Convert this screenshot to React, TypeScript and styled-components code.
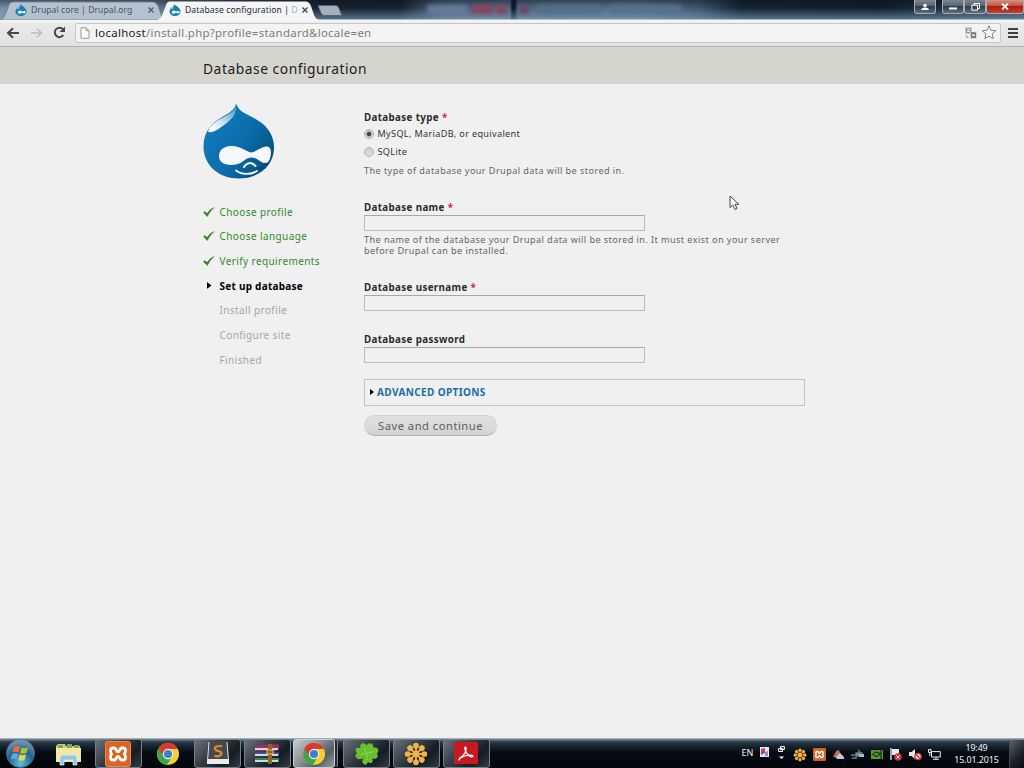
import React from "react";
import styled, { createGlobalStyle, css } from "styled-components";

const GlobalStyle = createGlobalStyle`
  * { box-sizing: border-box; }
  html, body { margin: 0; padding: 0; }
  body { width: 1024px; height: 768px; overflow: hidden; background: #f0f0f0; }
`;

const Screen = styled.div`
  position: relative;
  width: 1024px;
  height: 768px;
  display: flex;
  flex-direction: column;
  font-family: "Noto Sans", "Open Sans", sans-serif;
  background: #f0f0f0;
  white-space: nowrap;
  overflow: hidden;
`;

/* ---------- browser chrome ---------- */

const TabStrip = styled.div`
  height: 20px;
  flex: none;
  display: flex;
  align-items: flex-start;
  background:
    linear-gradient(180deg, rgba(10, 16, 24, 0.45) 0, rgba(120, 150, 180, 0) 40%, rgba(134, 165, 194, 0.55) 92%, #c5d8e8 100%),
    linear-gradient(90deg, #7890a8 0, #64798d 150px, #17212d 320px, #152230 400px, #4b617a 440px, #536a84 510px, #101c28 512px, #101c28 515px, #4d6980 518px, #547089 640px, #3d566c 700px, #152435 740px, #0f1d2d 880px, #2d4255 1024px);
`;

const TabShape = styled.svg`
  position: absolute;
  left: 0;
  top: 0;
`;

const Tab = styled.div<{ $width: number; $active?: boolean }>`
  position: relative;
  width: ${(p) => p.$width}px;
  height: 20px;
  display: flex;
  align-items: center;
  padding-left: 15px;
  color: ${(p) => (p.$active ? "#2a2a2a" : "#4c5560")};
  z-index: ${(p) => (p.$active ? 1 : 0)};
`;

const TabTitle = styled.span<{ $spacing: number; $width: number }>`
  position: relative;
  width: ${(p) => p.$width}px;
  margin-left: 4px;
  font-size: 8.6px;
  line-height: 20px;
  letter-spacing: ${(p) => p.$spacing}px;
  overflow: hidden;
`;

const Fade = styled.span`
  opacity: 0.35;
`;

const Glyph = styled.svg`
  position: relative;
  display: block;
  flex: none;
`;

const NewTab = styled.svg`
  display: block;
  margin: 5px 0 0 0;
`;

const BackgroundTitles = styled.div`
  display: flex;
  margin-left: 84px;
  width: 490px;
  height: 18px;
  padding-top: 5px;
  filter: blur(2px);
`;

const Smudge = styled.span<{ $width: number; $gap: number; $color: string }>`
  width: ${(p) => p.$width}px;
  margin-right: ${(p) => p.$gap}px;
  height: 9px;
  background: ${(p) => p.$color};
`;

const WindowButtons = styled.div`
  display: flex;
  margin-left: auto;
  height: 14px;
`;

const WindowButton = styled.div<{ $width: number; $close?: boolean; $gap?: number }>`
  width: ${(p) => p.$width}px;
  height: 14px;
  margin-right: ${(p) => p.$gap ?? 0}px;
  display: flex;
  align-items: center;
  justify-content: center;
  border: 1px solid #a3adb7;
  border-top: 0;
  border-radius: 0 0 3px 3px;
  background: ${(p) =>
    p.$close
      ? "linear-gradient(#d59387 0, #c4513f 45%, #a91f10 50%, #c7402b 100%)"
      : "linear-gradient(#7c8691 0, #566270 45%, #303d4a 50%, #5f6d7a 100%)"};
`;

const Toolbar = styled.div`
  height: 27px;
  flex: none;
  display: flex;
  align-items: center;
  padding: 0 4px 1px 6px;
  gap: 8px;
  background: linear-gradient(#f6f7f8 0, #e9e9e9 4px, #e2e2e2 100%);
  border-bottom: 1px solid #b2b2b2;
`;

const AddressBar = styled.div`
  width: 926px;
  height: 20px;
  display: flex;
  align-items: center;
  padding: 0 3px 0 4px;
  background: #f3f3f3;
  border: 1px solid #c6c6c6;
  border-radius: 2px;
`;

const Url = styled.span`
  flex: 1;
  margin-left: 5px;
  font-size: 11.4px;
  line-height: 18px;
  letter-spacing: 0.31px;
  color: #7d7d7d;
`;

const Host = styled.span`
  color: #222;
`;

const MenuLines = styled.div`
  width: 10px;
  height: 10px;
  margin-left: -1px;
  border-top: 2px solid #3e3e3e;
  border-bottom: 2px solid #3e3e3e;
  display: flex;
  align-items: center;
  &::after {
    content: "";
    width: 100%;
    height: 2px;
    background: #3e3e3e;
  }
`;

/* ---------- installer page ---------- */

const TitleBand = styled.header`
  height: 37px;
  flex: none;
  padding: 0 0 0 203px;
  background: #d5d5ce;
`;

const PageTitle = styled.h1`
  margin: 0;
  font-size: 13.8px;
  font-weight: 400;
  line-height: 43px;
  letter-spacing: 0.54px;
  color: #1c1c1c;
`;

const Page = styled.main`
  flex: 1;
  display: grid;
  grid-template-columns: 161px 441px;
  align-items: start;
  padding: 19px 0 0 203px;
`;

const Steps = styled.ol`
  list-style: none;
  margin: 19.3px 0 0;
  padding: 0;
`;

type StepState = "done" | "active" | "todo";

const stepStyles = {
  done: css`color: #35892f; letter-spacing: 0.4px;`,
  active: css`color: #000; font-weight: 700; letter-spacing: 0.25px;`,
  todo: css`color: #a5a5a5; letter-spacing: 0.4px;`,
};

const Step = styled.li<{ $state: StepState }>`
  height: 24.7px;
  display: grid;
  grid-template-columns: 16.5px auto;
  align-items: center;
  font-size: 10px;
  line-height: 24px;
  ${(p) => stepStyles[p.$state]}
`;

const Form = styled.form`
  padding-top: 9px;
`;

const Field = styled.div<{ $gap: number }>`
  margin-bottom: ${(p) => p.$gap}px;
`;

const Label = styled.div`
  height: 12px;
  font-size: 9.8px;
  line-height: 12px;
  font-weight: 700;
  letter-spacing: 0.35px;
  color: #2b2b2b;
`;

const Required = styled.span`
  color: #d4283c;
`;

const Radios = styled.div`
  padding-top: 0.5px;
`;

const RadioRow = styled.label`
  height: 18px;
  display: flex;
  align-items: center;
  gap: 3.5px;
  font-size: 9.1px;
  letter-spacing: 0.34px;
  color: #333;
`;

const RadioDot = styled.span<{ $checked?: boolean }>`
  width: 10px;
  height: 10px;
  border: 1px solid #b3b3b3;
  border-radius: 50%;
  background: ${(p) =>
    p.$checked
      ? "radial-gradient(circle, #444 0 1.8px, #cfcfcf 2.8px)"
      : "linear-gradient(#cfcfcf, #dedede)"};
`;

const Hint = styled.p<{ $top: number }>`
  margin: ${(p) => p.$top}px 0 0;
  font-size: 9.1px;
  line-height: 10.4px;
  letter-spacing: 0.43px;
  color: #666;
`;

const TextInput = styled.input`
  display: block;
  width: 281px;
  height: 16px;
  margin-top: 1px;
  padding: 0 3px;
  border: 1px solid #bcbcbc;
  border-top-color: #a8a8a8;
  background: #f0f0f0;
`;

const Fieldset = styled.div`
  height: 27px;
  display: flex;
  align-items: center;
  gap: 3px;
  padding: 0 0 1px 5px;
  border: 1px solid #c6c6c6;
`;

const FieldsetLink = styled.a`
  font-size: 10px;
  font-weight: 700;
  letter-spacing: 0.38px;
  color: #1a6ea6;
`;

const SubmitButton = styled.button`
  display: block;
  width: 133px;
  height: 21px;
  margin: 9px 0 0;
  padding: 1px 0 0;
  border: 1px solid #d3d3d3;
  border-bottom-color: #b5b5b5;
  border-radius: 11px;
  background: linear-gradient(#e0e0e0, #dadada 60%, #d1d1d1);
  font-family: inherit;
  font-size: 11.2px;
  line-height: 18px;
  letter-spacing: 0.5px;
  color: #5d5d5d;
`;

const Cursor = styled.svg`
  position: absolute;
  left: 729px;
  top: 195px;
`;

/* ---------- taskbar ---------- */

const Taskbar = styled.footer`
  height: 30px;
  flex: none;
  display: flex;
  align-items: stretch;
  color: #f2f4f6;
  background: linear-gradient(180deg, #b9c3cb 0, #5b6b7a 2px, #2b3a48 4px, #14202c 9px, #060b13 15px, #03060b 100%);
`;

const StartSlot = styled.div`
  width: 45px;
  padding: 1px 0 0 5px;
`;

const Apps = styled.div`
  display: flex;
  gap: 2.7px;
  padding-top: 1px;
`;

const AppButton = styled.div<{ $look?: "running" | "active" }>`
  width: 47px;
  height: 29px;
  display: flex;
  align-items: center;
  justify-content: center;
  border-radius: 3px;
  ${(p) =>
    p.$look === "running" &&
    css`
      border: 1px solid #76808a;
      background: linear-gradient(135deg, #6a737c 0, #343d46 40%, #161c23 70%, #343b42 100%);
    `}
  ${(p) =>
    p.$look === "active" &&
    css`
      width: 42px;
      margin-right: 5px;
      border: 1px solid #c9ced2;
      box-shadow: 3px 0 0 -1px #232b33, 4px 0 0 -1px #7c858d;
      background: linear-gradient(135deg, #c9cdd0 0, #858b90 45%, #565d63 70%, #989da1 100%);
    `}
`;

const Tray = styled.div`
  margin-left: auto;
  display: flex;
  align-items: center;
  padding-top: 3px;
`;

const Language = styled.span`
  width: 16px;
  margin-bottom: 5px;
  font-size: 9px;
  letter-spacing: 0;
`;

const TrayIcon = styled.span<{ $width?: number; $lift?: number }>`
  width: ${(p) => p.$width ?? 19.2}px;
  padding-bottom: ${(p) => p.$lift ?? 0}px;
  display: flex;
  justify-content: center;
`;

const Clock = styled.div`
  width: 65px;
  margin-bottom: 1px;
  text-align: center;
  font-size: 8.9px;
  line-height: 12.5px;
  letter-spacing: -0.1px;
`;

const ShowDesktop = styled.div`
  align-self: stretch;
  width: 15px;
  margin-top: -1px;
  border-left: 1px solid #3c4650;
  background: linear-gradient(135deg, #5a636c, #1b2026 60%, #0a0d12);
`;

/* ---------- drawings ---------- */

const Druplicon = ({ width, height }: { width: number; height: number }) => (
  <Glyph width={width} height={height} viewBox="0 0 72 76">
    <defs>
      <linearGradient id="drop" x1="0" y1="0" x2="1" y2="0.7">
        <stop offset="0" stopColor="#1480bd" />
        <stop offset="0.6" stopColor="#0b6dad" />
        <stop offset="1" stopColor="#07517f" />
      </linearGradient>
      <linearGradient id="shine" x1="0.8" y1="0.1" x2="0.2" y2="0.9">
        <stop offset="0" stopColor="#5ea5cf" />
        <stop offset="0.6" stopColor="#cfe3ef" />
        <stop offset="1" stopColor="#fff" />
      </linearGradient>
    </defs>
    <path
      d="M33 0C35 6 40 9 46 12C59 18 71 27 71 44C71 63 55 75 36 75C16 75 0.500 62 0.500 43C0.500 28 9 19 20 13C27 9 32 6 33 0Z"
      fill="url(#drop)"
    />
    <path d="M70 37C73 57 59 72 40 74C55 69 67 57 70 37Z" fill="#064a78" opacity="0.6" />
    <path d="M33 2C32 7 27 10 20 14C12 18 7 22 5 28C8 31 17 25 23 20C28 16 34 11 33 2Z" fill="url(#shine)" />
    <path
      d="M28 42.500C37 42 43 48 48 49C53 48.500 58 43 64 43C68 43.500 69 48 67 55C65 61 61 60.500 56 57C51 53 46 53 41 57C37 60.500 33 61.500 28 61.500C20 61.500 16 58 16 52.500C16 46.500 21 42.800 28 42.500Z"
      fill="#f6f9fb"
    />
    <path d="M41 63.500C44 58.500 49 58.500 52.500 62.500" fill="none" stroke="#f6f9fb" strokeWidth="2" strokeLinecap="round" />
    <path d="M33 67C39 71.500 48 71.500 54 67.500" fill="none" stroke="#f6f9fb" strokeWidth="1.800" strokeLinecap="round" />
  </Glyph>
);

const SmallDrop = () => (
  <Glyph width="12" height="12" viewBox="0 0 12 12">
    <path d="M5.500 0C6 2 11.500 3 11.500 7.500C11.500 10 9 12 6 12C3 12 0.500 10 0.500 7.500C0.500 3.500 5 3 5.500 0Z" fill="#1b7fb6" />
    <path d="M5 1.500L1.500 5.500L4 4.500Z" fill="#a9d4ea" />
    <path d="M3.500 7Q5 6 6.700 7.600Q9 6.400 10.500 7.200Q10.500 9.500 9.200 9.400L7 8.700Q5 10 3.500 9.500Q2 8 3.500 7Z" fill="#fff" />
  </Glyph>
);

const Cross = ({ color }: { color: string }) => (
  <Glyph width="6" height="6" viewBox="0 0 6 6">
    <path d="M0.500 0.500L5.500 5.500M5.500 0.500L0.500 5.500" stroke={color} strokeWidth="1.400" />
  </Glyph>
);

const Check = () => (
  <Glyph width="12" height="10" viewBox="0 0 12 10">
    <path d="M0.500 5.500L2 4.500L4 6.500Q7 2 11 0.500Q7 4 4.300 9.500Z" fill="#3a7d22" stroke="#3a7d22" strokeWidth="0.500" />
  </Glyph>
);

const Arrowhead = ({ size, inset }: { size: number; inset: number }) => (
  <Glyph width={size + inset} height={size * 1.5} viewBox={`${-inset} 0 ${size + inset} ${size * 1.5}`}>
    <path d={`M0 0L${size} ${size * 0.75}L0 ${size * 1.5}Z`} fill="#000" />
  </Glyph>
);

const ChromeLogo = () => (
  <Glyph width="24" height="24" viewBox="0 0 24 24">
    <circle cx="12" cy="12" r="11" fill="#f5cf32" />
    <path d="M12 12L2.500 6.500A11 11 0 0 1 21.800 7L12 7Z" fill="#d93a2d" />
    <path d="M12 12L2.500 6.500A11 11 0 0 0 11 23L16 14.500Z" fill="#3fa548" />
    <path d="M2.500 6.500A11 11 0 0 1 21.800 7L12 7A5 5 0 0 0 7.600 14Z" fill="#d93a2d" />
    <circle cx="12" cy="12" r="5.200" fill="#f2f4f5" />
    <circle cx="12" cy="12" r="4.100" fill="#3b82cd" />
  </Glyph>
);

const WindowsOrb = () => (
  <Glyph width="31" height="29" viewBox="0 0 31 29">
    <defs>
      <radialGradient id="orb" cx="0.5" cy="0.85" r="0.9">
        <stop offset="0" stopColor="#58c4e2" />
        <stop offset="0.5" stopColor="#245f8b" />
        <stop offset="1" stopColor="#8da8ba" />
      </radialGradient>
    </defs>
    <circle cx="15.500" cy="14.500" r="14" fill="url(#orb)" stroke="#4c7590" strokeWidth="0.800" />
    <path d="M9 8Q12 6 15 8L13.500 13.500Q11 12 7.500 13.500Z" fill="#ef6a35" />
    <path d="M16.500 8.500Q19 10 23 8.500L21.500 14Q18 15.500 15 14Z" fill="#9bc840" />
    <path d="M7.200 15Q10.500 13.500 13.200 15L12 20.500Q9 19 5.700 20.500Z" fill="#58a9e0" />
    <path d="M14.700 15.500Q18 17 21 15.500L19.500 21Q16 22.500 13.200 21Z" fill="#f9cf46" />
  </Glyph>
);

const ExplorerIcon = () => (
  <Glyph width="27" height="24" viewBox="0 0 27 24">
    <path d="M1 4L3 2H10L11 4H25V20H1Z" fill="#d9c875" />
    <path d="M3 3H8V6H3ZM12 2H17V6H12ZM19 3H24V6H19Z" fill="#7fa66a" />
    <path d="M1 6H26V20H1Z" fill="#f3e7a4" />
    <path d="M5 23V16Q5 13 8 13H19Q22 13 22 16V23H18V18H9V23Z" fill="#8fc9e2" stroke="#d7eff8" strokeWidth="0.700" />
  </Glyph>
);

const XamppMark = ({ size }: { size: number }) => (
  <Glyph width={size} height={size} viewBox="0 0 26 26">
    <rect x="0.500" y="0.500" width="25" height="25" rx="2" fill="#dc6425" stroke="#e98a4c" />
    <path
      d="M9.500 7H8C5 7 5 10.500 6.500 13C5 15.500 5 19 8 19H9.500C11.500 19 11 15.300 13 15.300C15 15.300 14.500 19 16.500 19H18C21 19 21 15.500 19.500 13C21 10.500 21 7 18 7H16.500C14.500 7 15 10.700 13 10.700C11 10.700 11.500 7 9.500 7Z"
      fill="none"
      stroke="#fff"
      strokeWidth="2.800"
    />
  </Glyph>
);

const SublimeIcon = () => (
  <Glyph width="26" height="25" viewBox="0 0 26 25">
    <path d="M4 0H22L24 20H2Z" fill="#47484b" />
    <path d="M2 18H24V23H2Z" fill="#e9ebec" />
    <path d="M4 1L2.500 20M22 1L23.500 20" stroke="#e0e2e4" strokeWidth="1" />
    <path d="M17 5.200C12 4.500 9.500 6 10 8.200C10.500 10.300 16.500 9.500 16.500 12.300C16.500 15 13 15.500 9.500 14.800" fill="none" stroke="#db8b32" strokeWidth="2.200" />
  </Glyph>
);

const WinrarIcon = () => (
  <Glyph width="26" height="20" viewBox="0 0 26 20">
    <path d="M1 3L5 0.500H25V5L22 7H1Z" fill="#9a315d" />
    <path d="M1 8.500H25V12H1Z" fill="#315db4" />
    <path d="M1 14H25V18H1Z" fill="#2d8c45" />
    <path d="M1 5H24M1 11H24M1 17H24" stroke="#d9d2ea" strokeWidth="1.800" />
    <path d="M14 0H18V20H14Z" fill="#8f642a" />
    <path d="M13 6H19V10H13Z" fill="none" stroke="#e7bd4a" strokeWidth="1.200" />
  </Glyph>
);

const CloverIcon = () => (
  <Glyph width="26" height="24" viewBox="0 0 26 25">
    <g fill="#6abf31">
      <path d="M13 13C7 10 4.500 5.500 6.500 2.500C8.500 0 11.500 1.500 12.500 3.500C14 0.500 18 0.500 19.500 3.500C20.500 7 17 10.500 13 13Z" />
      <path d="M13 12.500C9.500 18 5 19 2.500 17C0 15 1 12 3 11.500C0 9.500 0.500 6 4 6C8 6 11 9 13 12.500Z" />
      <path d="M13 12.500C15 7.500 19.500 4.500 23 6C26 8 25 11 23 12C25.500 14 24 17.500 21 17.500C17.500 17.500 15 15.500 13 12.500Z" />
      <path d="M13 12.500C8.500 16 7 20 9 22.500C11 25 13.500 23 14 20.500C16 23 19.500 22 19 18.500C18.500 15.500 16 14 13 12.500Z" />
    </g>
    <path d="M13 12L10 6M13 12L6 13M13 12L20 10M13 12L13 19" stroke="#8fd552" strokeWidth="1" />
  </Glyph>
);

const FlowerIcon = ({ size, petal }: { size: number; petal: string }) => (
  <Glyph width={size} height={size} viewBox="0 0 26 26">
    {Array.from({ length: 8 }, (_, i) => (
      <g key={i} transform={`rotate(${i * 45} 13 13)`}>
        <path d="M13 13V5" stroke={petal} strokeWidth="2" />
        <circle cx="13" cy="4" r="3.100" fill={petal} />
      </g>
    ))}
    <circle cx="13" cy="13" r="3.600" fill={petal} />
  </Glyph>
);

const AcrobatIcon = () => (
  <Glyph width="24" height="23" viewBox="0 0 24 23">
    <rect width="24" height="22" rx="1" fill="#c91920" />
    <path d="M5 16.500C10 14 13 9 12 5.500C10.500 4 10.500 7 12 10C14 14 17 15.500 19 14.500C19.500 12.500 12 12.500 6.500 16C4.500 17.500 4.500 18.500 6 17.500" fill="none" stroke="#fff" strokeWidth="1.300" />
  </Glyph>
);

/* ---------- screen ---------- */

const steps: { label: string; state: StepState }[] = [
  { label: "Choose profile", state: "done" },
  { label: "Choose language", state: "done" },
  { label: "Verify requirements", state: "done" },
  { label: "Set up database", state: "active" },
  { label: "Install profile", state: "todo" },
  { label: "Configure site", state: "todo" },
  { label: "Finished", state: "todo" },
];

const Browser = () => (
  <>
    <TabStrip>
      <Tab $width={154}>
        <TabShape width="168" height="20" viewBox="0 0 168 20">
          <path d="M0 20Q4 19 6 13L9 5Q10 2 13 2H153Q156 2 158 6L163 20Z" fill="#b4c1cf" stroke="#71808f" strokeWidth="0.800" />
        </TabShape>
        <SmallDrop />
        <TabTitle $spacing={0.05} $width={117}>Drupal core | Drupal.org</TabTitle>
        <Cross color="#56606a" />
      </Tab>
      <Tab $width={164} $active>
        <TabShape width="168" height="20" viewBox="0 0 168 20">
          <path d="M3 20Q7 19 9 13L12 5Q13 1.500 16 1.500H152Q155 1.500 157 6L160 15Q162 20 166 20Z" fill="#f4f5f7" />
        </TabShape>
        <SmallDrop />
        <TabTitle $spacing={0.1} $width={117}>
          Database configuration | <Fade>D</Fade>
        </TabTitle>
        <Cross color="#4a4a4a" />
      </Tab>
      <NewTab width="26" height="11" viewBox="0 0 26 11">
        <path d="M1 0.500H19Q21 0.500 22 3L25 10.500H7Q5 10.500 4 8Z" fill="#a4b0bc" stroke="#57636f" />
      </NewTab>
      <BackgroundTitles>
        <Smudge $width={40} $gap={4} $color="#66799a" />
        <Smudge $width={22} $gap={3} $color="#864560" />
        <Smudge $width={11} $gap={12} $color="#864560" />
        <Smudge $width={10} $gap={8} $color="#6b4766" />
        <Smudge $width={64} $gap={10} $color="#526f88" />
        <Smudge $width={70} $gap={0} $color="#56728b" />
      </BackgroundTitles>
      <WindowButtons>
        <WindowButton $width={22} $gap={6}>
          <Glyph width="8" height="8" viewBox="0 0 8 8">
            <circle cx="4" cy="2.500" r="1.800" fill="#fff" />
            <path d="M0 7Q0.500 4.800 4 4.500Q7.500 4.800 8 7Z" fill="#fff" />
          </Glyph>
        </WindowButton>
        <WindowButton $width={22}>
          <Glyph width="8" height="8" viewBox="0 0 8 8"><path d="M0 5.500H8" stroke="#fff" strokeWidth="2" /></Glyph>
        </WindowButton>
        <WindowButton $width={22}>
          <Glyph width="9" height="8" viewBox="0 0 9 8">
            <path d="M3 2V0.500H8.500V5.500H7M0.800 2.200H6.500V7.200H0.800Z" fill="none" stroke="#fff" />
          </Glyph>
        </WindowButton>
        <WindowButton $width={38} $close>
          <Glyph width="8" height="7" viewBox="0 0 8 7"><path d="M1 0.500L7 6.500M7 0.500L1 6.500" stroke="#fff" strokeWidth="1.800" /></Glyph>
        </WindowButton>
      </WindowButtons>
    </TabStrip>
    <Toolbar>
      <Glyph width="14" height="12" viewBox="0 0 14 12">
        <path d="M13 6H2.500M7 1.300L2 6L7 10.700" fill="none" stroke="#484848" strokeWidth="2" />
      </Glyph>
      <Glyph width="16" height="12" viewBox="0 0 16 12">
        <path d="M3 6H13M9 1.800L13.500 6L9 10.200" fill="none" stroke="#bdbdbd" strokeWidth="1.700" />
      </Glyph>
      <Glyph width="15" height="13" viewBox="0 0 15 13">
        <path d="M11.300 9.200A4.700 4.700 0 1 1 11 3.300" fill="none" stroke="#484848" strokeWidth="2" />
        <path d="M13 0.500V6H7.500Z" fill="#484848" />
      </Glyph>
      <AddressBar>
        <Glyph width="10" height="12" viewBox="0 0 10 12">
          <path d="M1 0.700H6L9 3.700V11.300H1ZM6 0.700V3.700H9" fill="#fafafa" stroke="#9a9a9a" />
        </Glyph>
        <Url>
          <Host>localhost</Host>/install.php?profile=standard&amp;locale=en
        </Url>
        <Glyph width="12" height="12" viewBox="0 0 11 11">
          <path d="M0.500 0.500H6V6H0.500Z" fill="#9a9a9a" />
          <path d="M2 2H4.500M2 4H4.500" stroke="#f5f5f5" />
          <path d="M5 4.500H10.500V10.500H5Z" fill="#777" stroke="#f5f5f5" strokeWidth="0.500" />
          <path d="M6.500 6.500H9V8.500H6.500Z" fill="#ddd" />
          <path d="M1 7.500V9.500H4" fill="none" stroke="#888" strokeDasharray="1.500 1" />
        </Glyph>
        <Glyph width="20" height="15" viewBox="-4 0 19 15">
          <path d="M7.500 0.800L9.400 5.200L14.300 5.700L10.600 8.900L11.700 13.700L7.500 11.200L3.300 13.700L4.400 8.900L0.700 5.700L5.600 5.200Z" fill="#fafafa" stroke="#808080" strokeWidth="1" />
        </Glyph>
      </AddressBar>
      <MenuLines />
    </Toolbar>
  </>
);

const Installer = () => (
  <>
    <TitleBand>
      <PageTitle>Database configuration</PageTitle>
    </TitleBand>
    <Page>
      <div>
        <Druplicon width={72} height={77} />
        <Steps>
          {steps.map((s) => (
            <Step key={s.label} $state={s.state}>
              <span>
                {s.state === "done" && <Check />}
                {s.state === "active" && <Arrowhead size={4.5} inset={4} />}
              </span>
              {s.label}
            </Step>
          ))}
        </Steps>
      </div>
      <Form>
        <Field $gap={26}>
          <Label>Database type <Required>*</Required></Label>
          <Radios>
            <RadioRow>
              <RadioDot $checked />
              MySQL, MariaDB, or equivalent
            </RadioRow>
            <RadioRow>
              <RadioDot />
              SQLite
            </RadioRow>
          </Radios>
          <Hint $top={5}>The type of database your Drupal data will be stored in.</Hint>
        </Field>
        <Field $gap={25.7}>
          <Label>Database name <Required>*</Required></Label>
          <TextInput />
          <Hint $top={4.5}>
            The name of the database your Drupal data will be stored in. It must exist on your server
            <br />
            before Drupal can be installed.
          </Hint>
        </Field>
        <Field $gap={23}>
          <Label>Database username <Required>*</Required></Label>
          <TextInput />
        </Field>
        <Field $gap={16}>
          <Label>Database password</Label>
          <TextInput />
        </Field>
        <Fieldset>
          <Arrowhead size={4} inset={0} />
          <FieldsetLink>ADVANCED OPTIONS</FieldsetLink>
        </Fieldset>
        <SubmitButton type="button">Save and continue</SubmitButton>
      </Form>
    </Page>
  </>
);

const SystemBar = () => (
  <Taskbar>
    <StartSlot><WindowsOrb /></StartSlot>
    <Apps>
      <AppButton><ExplorerIcon /></AppButton>
      <AppButton $look="running"><XamppMark size={26} /></AppButton>
      <AppButton><ChromeLogo /></AppButton>
      <AppButton $look="running"><SublimeIcon /></AppButton>
      <AppButton $look="running"><WinrarIcon /></AppButton>
      <AppButton $look="active"><ChromeLogo /></AppButton>
      <AppButton $look="running"><CloverIcon /></AppButton>
      <AppButton $look="running"><FlowerIcon size={24} petal="#f0b544" /></AppButton>
      <AppButton $look="running"><AcrobatIcon /></AppButton>
    </Apps>
    <Tray>
      <Language>EN</Language>
      <TrayIcon $width={14} $lift={5}>
        <Glyph width="9" height="10" viewBox="0 0 9 10">
          <path d="M0 0H9V10H0Z" fill="#e8e6ee" />
          <path d="M1 2L5 1V6L1 8Z" fill="#b9475c" /><path d="M5 5L8 4V9H5Z" fill="#8a93c0" />
        </Glyph>
      </TrayIcon>
      <TrayIcon $width={19} $lift={5}>
        <Glyph width="7" height="13" viewBox="0 0 7 13">
          <path d="M2.500 0.600H6.400V3.500H2.500ZM0.600 2.500H4.500V5.500H0.600Z" fill="#1b2631" stroke="#fff" />
          <path d="M1 10.500H6L3.500 13Z" fill="#fff" />
        </Glyph>
      </TrayIcon>
      <TrayIcon><FlowerIcon size={14} petal="#f3ad43" /></TrayIcon>
      <TrayIcon><XamppMark size={13} /></TrayIcon>
      <TrayIcon>
        <Glyph width="13" height="11" viewBox="0 0 13 11">
          <path d="M1 8L4 2L7 1L9 6L6 9Z" fill="#c9694f" /><path d="M4 8L8 4L12 8V10H5Z" fill="#c6cbd0" />
        </Glyph>
      </TrayIcon>
      <TrayIcon>
        <Glyph width="13" height="11" viewBox="0 0 13 11">
          <path d="M0 6H5M8 3V8M5 4H11V7H5ZM7 1L10 4M1 9H6" fill="#97a2a8" stroke="#5f8095" strokeWidth="1.300" />
          <path d="M8 5H13V8H8Z" fill="#b6b8a8" />
        </Glyph>
      </TrayIcon>
      <TrayIcon>
        <Glyph width="12" height="11" viewBox="0 0 12 11">
          <rect y="1" width="12" height="9" fill="#5a952d" />
          <path d="M1 6Q5 1 9 5Q6 9 3 6M10 1V10" fill="none" stroke="#17300d" strokeWidth="1.200" />
        </Glyph>
      </TrayIcon>
      <TrayIcon>
        <Glyph width="12" height="13" viewBox="0 0 12 13">
          <path d="M1 0V12" stroke="#eee" strokeWidth="1.300" /><path d="M2 1H9V7H2Z" fill="#e8e8e8" />
          <circle cx="8" cy="9" r="3.800" fill="#d2303b" /><path d="M6.500 7.500L9.500 10.500M9.500 7.500L6.500 10.500" stroke="#fff" />
        </Glyph>
      </TrayIcon>
      <TrayIcon>
        <Glyph width="13" height="13" viewBox="0 0 13 13">
          <path d="M0 4H2.500L6 1V11L2.500 8H0Z" fill="#e5e5e5" />
          <circle cx="9" cy="8.500" r="3.200" fill="#edd" stroke="#cf2f38" strokeWidth="1.300" /><path d="M7 6.500L11 10.500" stroke="#cf2f38" strokeWidth="1.300" />
        </Glyph>
      </TrayIcon>
      <TrayIcon>
        <Glyph width="13" height="11" viewBox="0 0 13 11">
          <path d="M3.500 2.600H12.300V8H3.500ZM8 8V10.300M5 10.300H11M0.500 0.500H3V3.500H0.500ZM1.800 3.500V7" fill="none" stroke="#e9ebed" />
        </Glyph>
      </TrayIcon>
      <Clock>19:49<br />15.01.2015</Clock>
      <ShowDesktop />
    </Tray>
  </Taskbar>
);

export default function App() {
  return (
    <Screen>
      <GlobalStyle />
      <Browser />
      <Installer />
      <SystemBar />
      <Cursor width="11" height="16" viewBox="0 0 11 16">
        <path d="M1 1V12.500L3.800 10L6 14.500L8 13.500L6 9.300H9.800Z" fill="#fafafa" stroke="#444" strokeWidth="1" />
      </Cursor>
    </Screen>
  );
}
